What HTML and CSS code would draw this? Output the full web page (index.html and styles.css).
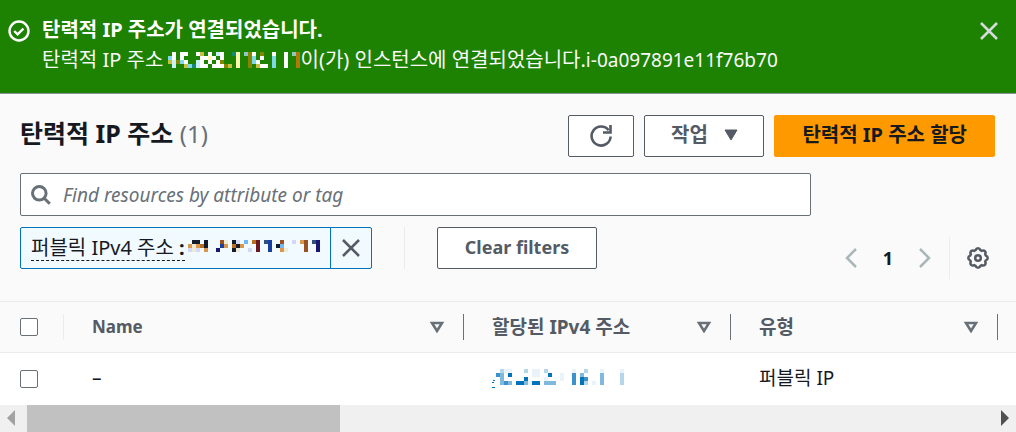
FILE: index.html
```html
<!DOCTYPE html>
<html lang="ko">
<head>
<meta charset="utf-8">
<meta name="viewport" content="width=device-width, initial-scale=1">
<title>탄력적 IP 주소</title>
<link rel="stylesheet" href="styles.css">
</head>
<body>
<section class="flash" role="status">
  <svg class="flash-icon" viewBox="0 0 22 22" aria-hidden="true"><circle cx="11" cy="11" r="9.5"/><path d="M6.2 11l3.4 3.4 5.8-5.8"/></svg>
  <div class="flash-text">
    <strong class="flash-title">탄력적 IP 주소가 연결되었습니다.</strong>
    <p class="flash-body">탄력적 IP 주소 <svg class="mask mask-flash" viewBox="0 0 33 4" aria-hidden="true">
      <path stroke="#fff" d="M1 .5h1m1 0h2m2 0h1m2 0h1m2 0h1m7 0h1m4 0h1m2 0h1M1 1.5h1m1 0h1m4 0h2m1 0h1m1 0h1m9 0h1m5 0h1M4 2.5h1m3 0h1m1 0h1m1 0h1m9 0h1m6 0h1M7 3.5h3m1 0h3m9 0h2m4 0h1"/>
      <path stroke="#c8f0f8" d="M12 .5h1M1 2.5h1m5 0h1M1 3.5h1M7 3.5h1"/>
      <path stroke="#7fd8e8" d="M0 1.5h1m20 0h1m4 0h1M3 2.5h1m17 0h1m4 0h1M5 3.5h1m20 0h1"/>
      <path stroke="#8cc8c0" d="M19 .5h1m11 0h1"/>
      <path stroke="#168878" d="M16 .5h1M6 3.5h1"/>
      <path stroke="#fff4b0" d="M17 .5h1M10 1.5h1m6 0h1m-1 1h1m-1 1h1"/>
      <path stroke="#c8c040" d="M8 .5h1M0 2.5h1M4 3.5h1m10 0h1m6 0h1"/>
      <path stroke="#858500" d="M20 .5h1m2 0h1M20 1.5h1M2 2.5h1m10 0h1m6 0h1M14 3.5h1m5 0h1"/>
      <path stroke="#b07808" d="M32 .5h1m-1 1h1m-1 1h1m-1 1h1"/>
    </svg>이(가) 인스턴스에 연결되었습니다.<span class="latin">i-0a097891e11f76b70</span></p>
  </div>
  <button class="icon-button flash-close" type="button" aria-label="닫기"><svg viewBox="0 0 18 18" width="18" height="18"><path d="M1 1l16 16M17 1L1 17"/></svg></button>
</section>

<main class="panel">
  <header class="panel-head">
    <h1 class="title">탄력적 IP 주소 <span class="count">(1)</span></h1>
    <div class="actions">
      <button class="button button-refresh" type="button" aria-label="새로 고침"><svg viewBox="0 0 22 22" width="22" height="22"><path class="line" d="M20.6 11.5A9.5 9.5 0 1 1 18.6 5.2"/><path class="line" d="M20.5 0v7.5H13"/></svg></button>
      <button class="button button-menu" type="button">작업 <svg viewBox="0 0 14 12" width="14" height="12" aria-hidden="true"><path class="solid" d="M1 1h12L7 11z"/></svg></button>
      <button class="button button-primary" type="button">탄력적 IP 주소 할당</button>
    </div>
  </header>

  <div class="toolbar">
    <div class="filters">
      <label class="search">
        <svg viewBox="0 0 20 20" width="20" height="20" aria-hidden="true"><circle cx="8.3" cy="8.3" r="6.8"/><path d="M13.2 13.2l5.6 5.6"/></svg>
        <input class="search-input" type="text" placeholder="Find resources by attribute or tag" aria-label="Find resources by attribute or tag">
      </label>
      <div class="tokens">
        <div class="token">
          <span class="token-label"><span class="token-key">퍼블릭 IPv4 주소 <b>:</b></span><svg class="mask mask-token" viewBox="0 0 33 3" aria-hidden="true">
            <path stroke="#161b2c" d="M1 .5h2m1 0h1m6 0h1M4 1.5h1m7 0h1m9 0h1M11 2.5h1"/>
            <path stroke="#985024" d="M8 .5h1m14 0h1m5 0h1M29 1.5h1m-1 1h1"/>
            <path stroke="#b87020" d="M16 .5h1M3 1.5h1m7 0h1"/>
            <path stroke="#d89850" d="M28 .5h1M0 1.5h1m1 0h1m6 0h1m3 0h1M4 2.5h1m18 0h1"/>
            <path stroke="#681820" d="M17 .5h1m-1 1h1m-1 1h1"/>
            <path stroke="#1840a0" d="M20 .5h1M8 1.5h1m11 0h1m-1 1h1"/>
            <path stroke="#305080" d="M19 .5h1m11 0h1"/>
            <path stroke="#181870" d="M32 .5h1m-1 1h1M7 2.5h1m24 0h1"/>
            <path stroke="#70b8f0" d="M14 .5h1m8 1h1"/>
            <path stroke="#d4d8f4" d="M12 .5h1m13 0h1M0 2.5h1m1 0h1m12 0h1"/>
            <path stroke="#ecebd4" d="M9 .5h1M1 1.5h1M1 2.5h1m10 0h1m11 0h1"/>
          </svg></span>
          <button class="icon-button token-remove" type="button" aria-label="필터 제거"><svg viewBox="0 0 18 18" width="18" height="18"><path d="M1 1l16 16M17 1L1 17"/></svg></button>
        </div>
        <span class="rule"></span>
        <button class="button button-clear" type="button">Clear filters</button>
      </div>
    </div>
    <nav class="pager" aria-label="페이지">
      <button class="icon-button page-step" type="button" aria-label="이전 페이지"><svg viewBox="0 0 12 20" width="12" height="20"><path d="M11 1l-9 9 9 9"/></svg></button>
      <button class="icon-button page-number" type="button" aria-current="page">1</button>
      <button class="icon-button page-step" type="button" aria-label="다음 페이지"><svg viewBox="0 0 12 20" width="12" height="20"><path d="M1 1l9 9-9 9"/></svg></button>
      <span class="rule"></span>
      <button class="icon-button settings" type="button" aria-label="기본 설정"><svg viewBox="0 0 22 22" width="22" height="22"><path d="M8.6 3.2 Q9.2 1.3 11 1.3 Q12.8 1.3 13.4 3.2 L14.8 3.8 Q16.6 2.9 17.9 4.1 Q19.1 5.4 18.2 7.2 L18.8 8.6 Q20.7 9.2 20.7 11 Q20.7 12.8 18.8 13.4 L18.2 14.8 Q19.1 16.6 17.9 17.9 Q16.6 19.1 14.8 18.2 L13.4 18.8 Q12.8 20.7 11 20.7 Q9.2 20.7 8.6 18.8 L7.2 18.2 Q5.4 19.1 4.1 17.9 Q2.9 16.6 3.8 14.8 L3.2 13.4 Q1.3 12.8 1.3 11 Q1.3 9.2 3.2 8.6 L3.8 7.2 Q2.9 5.4 4.1 4.1 Q5.4 2.9 7.2 3.8 Z"/><circle cx="11" cy="11" r="2.8"/></svg></button>
    </nav>
  </div>

  <div class="table-wrap">
    <table class="grid">
      <colgroup><col class="col-check"><col class="col-name"><col class="col-data"><col class="col-data"><col></colgroup>
      <thead>
        <tr>
          <th scope="col" class="check-cell"><div class="head-cell head-check"><input class="check" type="checkbox" aria-label="모두 선택"></div></th>
          <th scope="col"><div class="head-cell head-latin">Name<svg class="sort" viewBox="0 0 14 12" aria-hidden="true"><path d="M2 2h10L7 10z"/></svg></div></th>
          <th scope="col"><div class="head-cell">할당된 IPv4 주소<svg class="sort" viewBox="0 0 14 12" aria-hidden="true"><path d="M2 2h10L7 10z"/></svg></div></th>
          <th scope="col"><div class="head-cell">유형<svg class="sort" viewBox="0 0 14 12" aria-hidden="true"><path d="M2 2h10L7 10z"/></svg></div></th>
          <th scope="col"></th>
        </tr>
      </thead>
      <tbody>
        <tr>
          <td class="check-cell"><input class="check" type="checkbox" aria-label="주소 선택"></td>
          <td>–</td>
          <td><a class="address" href="#" aria-label="할당된 IPv4 주소"><svg class="mask mask-link" viewBox="0 0 33 5" aria-hidden="true">
            <path stroke="#0073bb" d="M4 1.5h1m9 0h1M8 2.5h1m13 0h1M6 3.5h2m2 0h2m10 0h1"/>
            <path stroke="#3c92cb" d="M1 1.5h1m18 0h1m-1 1h1M3 3.5h1m16 0h1M23 2.5h1"/>
            <path stroke="#7fb9de" d="M2 1.5h1m19 0h1m4 0h1M2 2.5h1m24 0h1M2 3.5h1m1 0h1m3 0h1m4 0h3m11 0h1"/>
            <path stroke="#b4d6eb" d="M2 .5h1m5 0h1m4 0h1m9 0h1m8 1h1m-1 1h1M23 3.5h1m8 0h1"/>
            <path stroke="#eaf3f9" d="M3 .5h2m5 0h2m8 0h1m6 0h1m4 0h1M10 1.5h2m5 0h1M13 2.5h1m3 0h1M9 3.5h1m15 0h1"/>
            <path stroke="#0073bb" stroke-width=".25" d="M0 4.6h.8M0 3.4h.6M.3 2.8h.5"/>
          </svg></a></td>
          <td>퍼블릭 IP</td>
          <td></td>
        </tr>
      </tbody>
    </table>
  </div>

  <div class="scrollbar">
    <button class="scroll-arrow scroll-left" type="button" aria-label="왼쪽으로 스크롤"><svg viewBox="0 0 8 16" width="8" height="16"><path d="M8 0v16L0 8z"/></svg></button>
    <div class="scroll-track"><div class="scroll-thumb"></div></div>
    <button class="scroll-arrow scroll-right" type="button" aria-label="오른쪽으로 스크롤"><svg viewBox="0 0 8 16" width="8" height="16"><path d="M0 0v16l8-8z"/></svg></button>
  </div>
</main>
</body>
</html>
```
FILE: styles.css
```css
* { box-sizing: border-box; }

body {
  margin: 0;
  background: #fafafa;
  color: #16191f;
  font: 20px/30px "Noto Sans", "Noto Sans CJK KR", sans-serif;
}

button, input { font: inherit; margin: 0; }
svg { display: block; flex: none; fill: none; }

.icon-button {
  display: flex;
  align-items: center;
  justify-content: center;
  padding: 0;
  border: 0;
  background: none;
  color: #545b64;
}
.icon-button svg { stroke: currentColor; stroke-width: 2.5; }

.mask {
  display: inline-block;
  stroke-width: 1;
  shape-rendering: crispEdges;
}
.mask-flash { width: 132px; height: 16px; vertical-align: -1px; }
.mask-token { width: 132px; height: 12px; margin: 0 0 4px 3px; }
.mask-link { width: 132px; height: 20px; vertical-align: -4px; }

.flash {
  display: flex;
  align-items: flex-start;
  min-height: 94px;
  padding: 15px 18px 16px 8px;
  border-bottom: 1px solid #879596;
  background: #1d8102;
  color: #fff;
}
.flash-icon { width: 22px; height: 22px; margin: 5px 12px 0 0; stroke: #fff; stroke-width: 2.4; }
.flash-text { flex: 1; }
.flash-title { display: block; }
.flash-body { margin: 0; color: #fafafa; }
.latin { font-size: 19px; }
.flash-close { height: 32px; color: #d5dbdb; }

.panel-head {
  display: flex;
  align-items: flex-start;
  justify-content: space-between;
  padding: 21px 21px 16px 20px;
}
.title { margin: 0; font-size: 25px; line-height: 36px; font-weight: 700; }
.count { color: #687078; font-size: 24px; font-weight: 400; }
.actions { display: flex; gap: 10px; }

.button {
  display: flex;
  align-items: center;
  justify-content: center;
  height: 42px;
  padding: 0 27px 2px;
  border: 1px solid #545b64;
  border-radius: 2px;
  background: #fff;
  color: #545b64;
  font-weight: 700;
  white-space: nowrap;
}
.button-refresh { width: 66px; padding: 0; }
.button-menu { width: 120px; gap: 16px; }
.button-primary { border-color: #ff9900; background: #ff9900; color: #16191f; }
.button-clear { font-size: 18px; }
.line { stroke: #545b64; stroke-width: 2.6; }
.solid { fill: #545b64; stroke: #545b64; stroke-linejoin: round; }

.toolbar {
  display: flex;
  align-items: flex-end;
  gap: 32px;
  padding: 0 26px 22px 20px;
}
.filters { flex: 1; padding-bottom: 10px; }
.search {
  display: flex;
  align-items: center;
  gap: 12px;
  height: 43px;
  padding: 0 10px;
  border: 1px solid #687078;
  border-radius: 2px;
  background: #fff;
}
.search svg { stroke: #687078; stroke-width: 3; }
.search-input {
  flex: 1;
  min-width: 0;
  padding: 0;
  border: 0;
  outline: 0;
  background: none;
  color: #16191f;
  font-size: 19px;
}
.search-input::placeholder { color: #687078; font-style: italic; opacity: 1; }

.tokens { display: flex; margin-top: 11px; }
.token {
  display: flex;
  height: 42px;
  border: 1px solid #0073bb;
  border-radius: 2px;
  background: #f1faff;
}
.token-label { display: flex; align-items: center; padding: 0 10px; white-space: nowrap; }
.token-key { line-height: 24px; border-bottom: 1px dashed #16191f; }
.token-remove { width: 41px; border-left: 1px solid #0073bb; }
.rule { width: 1px; background: #eaeded; }
.tokens .rule { margin: 0 32px; }

.pager { display: flex; align-items: stretch; height: 42px; font-size: 18px; }
.page-step { width: 16px; color: #aab7b8; }
.page-number { width: 58px; color: #16191f; font-weight: 700; }
.pager .rule { margin: 0 16px; }
.settings { width: 24px; }

.grid { width: 100%; border-collapse: collapse; table-layout: fixed; }
.col-check { width: 64px; }
.col-name { width: 400px; }
.col-data { width: 267px; }
.grid th {
  height: 51px;
  padding: 0;
  border-top: 1px solid #eaeded;
  border-bottom: 1px solid #eaeded;
  color: #545b64;
  font-size: 19px;
  text-align: left;
}
.head-cell {
  display: flex;
  align-items: center;
  justify-content: space-between;
  height: 26px;
  padding: 0 19px 0 28px;
  border-right: 1px solid #687078;
  line-height: 26px;
}
.head-latin { font-size: 17px; }
.head-check { padding: 0 0 0 20px; border-color: #eaeded; }
.sort { width: 14px; height: 12px; stroke: #687078; stroke-width: 2.6; }
.grid td { height: 52px; padding: 0 28px 2px; background: #fff; font-size: 19px; }
.grid .check-cell { padding-right: 0; }
.grid td.check-cell { padding-bottom: 0; padding-left: 20px; }
.check {
  display: block;
  width: 18px;
  height: 18px;
  appearance: none;
  border: 1px solid #687078;
  border-radius: 2px;
  background: #fff;
}
.check:checked { background: #0073bb; }
.address { color: #0073bb; }

.scrollbar { display: flex; height: 27px; background: #f0f0f0; }
.scroll-arrow {
  display: flex;
  align-items: center;
  justify-content: center;
  width: 27px;
  padding: 0;
  border: 0;
  background: none;
}
.scroll-left svg { fill: #a3a3a3; }
.scroll-right svg { fill: #505050; }
.scroll-left { padding-right: 6px; }
.scroll-right { padding-left: 4px; }
.scroll-track { flex: 1; }
.scroll-thumb { width: 32.5%; height: 100%; background: #c1c1c1; }
```
